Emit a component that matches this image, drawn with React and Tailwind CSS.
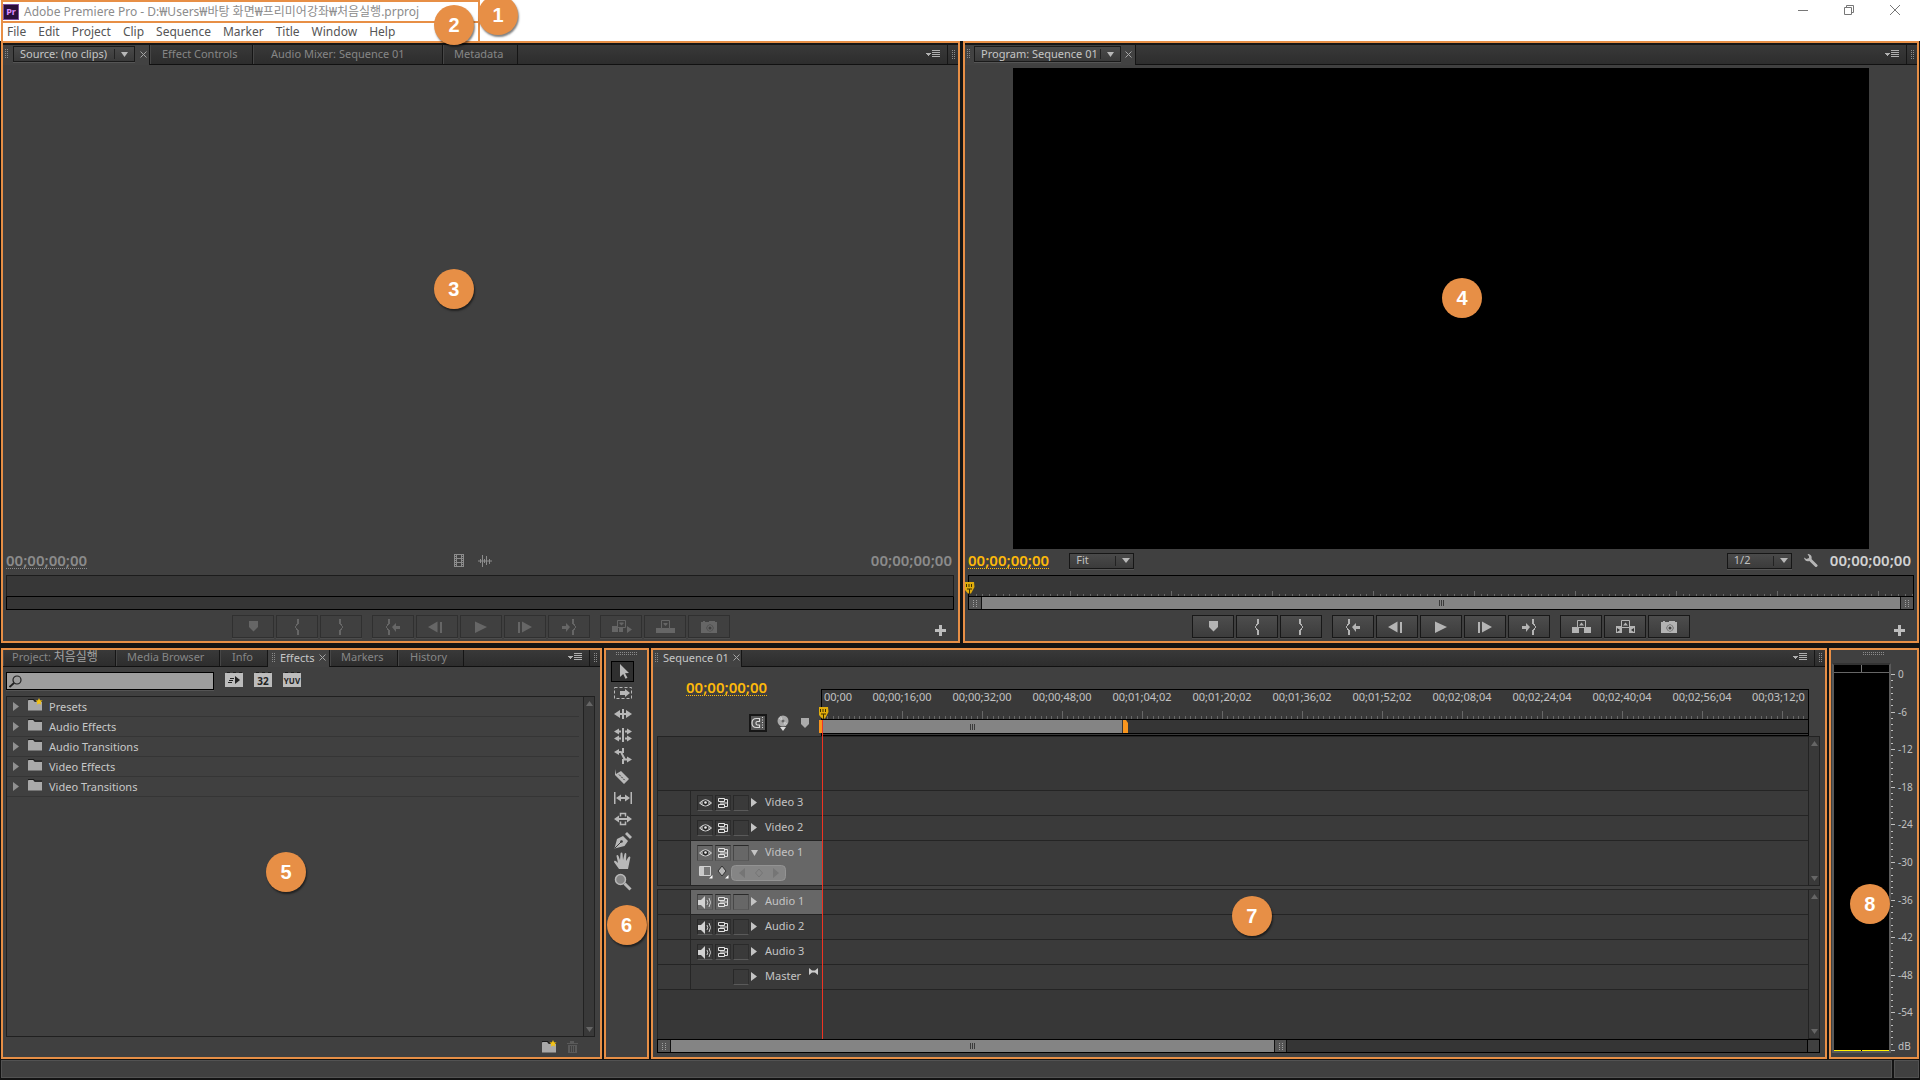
import React from "react";

const UI = "font-['Noto_Sans','Noto_Sans_CJK_KR',sans-serif]";

/* ---------- shared pieces ---------- */

function Badge({ n, className }) {
  return (
    <span
      className={
        "absolute z-20 flex size-10 -translate-x-1/2 -translate-y-1/2 items-center justify-center rounded-full bg-[#e78f46] font-['Liberation_Sans',sans-serif] text-xl font-bold text-white shadow-[1px_2px_2px_rgba(0,0,0,0.5)] " +
        className
      }
    >
      {n}
    </span>
  );
}

function Frame({ label, className = "", children }) {
  return (
    <section
      aria-label={label}
      className={"relative flex min-h-0 min-w-0 flex-col border-2 border-[#e78f46] bg-[#404040] " + className}
    >
      {children}
    </section>
  );
}

function Grip({ wide = false }) {
  const cols = wide ? 11 : 2;
  const rows = wide ? 2 : 5;
  const dots = [];
  for (let x = 0; x < cols; x++) for (let y = 0; y < rows; y++) dots.push([x * 2, y * 2]);
  return (
    <svg width={cols * 2} height={rows * 2} className="shrink-0" shapeRendering="crispEdges" aria-hidden="true">
      {dots.map(([x, y]) => (
        <rect key={x + "-" + y} x={x} y={y} width="1" height="1" fill="#8a8a8a" />
      ))}
    </svg>
  );
}

function CloseIcon() {
  return (
    <button type="button" aria-label="Close tab" className="flex size-2 items-center justify-center">
      <svg width="7" height="7" viewBox="0 0 7 7" stroke="#a5a5a5" strokeWidth="1">
        <path d="M.5.5l6 6M6.500.5l-6 6" />
      </svg>
    </button>
  );
}

function TabEnd() {
  return (
    <div className="ml-auto flex items-center">
      <button type="button" aria-label="Panel menu" className="mr-[7px] mb-0.5">
        <svg width="14" height="8" viewBox="0 0 14 8" shapeRendering="crispEdges" className="block">
          <path d="M0 3h5l-2.500 3z" fill="#b0b0b0" />
          <path d="M6 0h8v1H6zM6 2h8v1H6zM6 4h8v1H6zM6 6h8v1H6z" fill="#b0b0b0" />
        </svg>
      </button>
      <span className="flex items-center self-stretch border-l border-[#161616] pr-0.5 pl-1">
        <Grip />
      </span>
    </div>
  );
}

function TabBar({ tall = false, children }) {
  return (
    <div
      className={
        "flex shrink-0 border-b border-[#111] bg-linear-to-b from-[#393939] to-[#2d2d2d] text-[11px] leading-4 text-[#868686] " +
        (tall ? "h-[22px] border-t-2 border-t-[#151515]" : "h-[17px]")
      }
    >
      {children}
      <TabEnd />
    </div>
  );
}

function Tab({ className = "", children }) {
  return (
    <button
      type="button"
      className={"flex items-center border-r border-l border-r-[#151515] border-l-[#464646] pb-0.5 text-left whitespace-nowrap " + className}
    >
      {children}
    </button>
  );
}

function ActiveTab({ className = "", children }) {
  return (
    <div className={"-mb-px flex items-center border-r border-[#151515] bg-[#424242] pb-0.5 text-[#c6c6c6] " + className}>{children}</div>
  );
}

function MonitorMenu({ label, className }) {
  return (
    <button
      type="button"
      className={
        "flex h-4 items-center border border-[#1a1a1a] bg-linear-to-b from-[#4a4a4a] to-[#3a3a3a] pl-1.5 leading-[14px] whitespace-nowrap shadow-[0_1px_0_#555] " +
        className
      }
    >
      {label}
      <span className="ml-auto flex h-2.5 items-center border-l border-[#222] px-1.5">
        <svg width="7" height="5" viewBox="0 0 7 5">
          <path d="M0 0h7L3.500 5z" fill="#b8b8b8" />
        </svg>
      </span>
    </button>
  );
}

function Picker({ label, options }) {
  return (
    <label className="relative flex">
      <select
        aria-label={label}
        className="h-4 w-[65px] appearance-none border border-[#161616] bg-linear-to-b from-[#4a4a4a] to-[#3b3b3b] pb-0.5 pl-1.5 text-[11px] leading-3 text-[#c0c0c0] shadow-[0_1px_0_#555]"
      >
        {options.map((o) => (
          <option key={o}>{o}</option>
        ))}
      </select>
      <span className="pointer-events-none absolute top-[3px] right-1 flex h-2.5 items-center border-l border-[#222] pl-1.5">
        <svg width="8" height="5" viewBox="0 0 8 5">
          <path d="M0 0h8L4 5z" fill="#b8b8b8" />
        </svg>
      </span>
    </label>
  );
}

function Timecode({ className = "" }) {
  return (
    <span className={"border-b border-dotted text-[15px] leading-4 font-semibold whitespace-nowrap " + className}>00;00;00;00</span>
  );
}

/* ---------- transport icons (28 x 16) ---------- */

const TRANSPORT = {
  marker: <path d="M10 2h9v6l-4.500 4.500L10 8z" />,
  markIn: <path d="M14 0h2v5h-1v1h-1v1h-1v2h1v1h1v1h1v5h-2v-5h-1v-2h-1V7h1V5h1z" />,
  markOut: <path d="M12 0h2v5h1v2h1v2h-1v2h-1v5h-2v-5h1v-1h1V9h1V7h-1V6h-1V5h-1z" />,
  goIn: (
    <>
      <path d="M9 0h2v5h-1v1H9v1H8v2h1v1h1v1h1v5H9v-5H8V9H7V7h1V5h1z" />
      <path d="M13 8l4-4v3h4v3h-4v3z" />
    </>
  ),
  stepBack: <path d="M5 8l9.500-5.500v11zM17 3h2v11h-2z" />,
  play: <path d="M8 2.500l12 5.500-12 6z" />,
  stepFwd: <path d="M7 3h2v11H7zM11 2.500L21 8l-10 5.500z" />,
  goOut: (
    <>
      <path d="M17 0h2v5h1v2h1v2h-1v2h-1v5h-2v-5h1v-1h1V9h1V7h-1V6h-1V5h-1z" />
      <path d="M15 8l-4-4v3H7v3h4v3z" />
    </>
  ),
  insert: (
    <>
      <path d="M5 7h6v6H5zM18 7h2l5 3.500-5 3.500V7zM12 9h4v4h-4z" />
      <path d="M10.500 1.500h8v7h-8z" fill="none" stroke="currentColor" />
      <path d="M12.500 3.500h4v1l-2 2-2-2z" />
    </>
  ),
  overwrite: (
    <>
      <path d="M5 9h19v5H5z" />
      <path d="M10.500 1.500h8v8h-8z" fill="#404040" stroke="currentColor" />
      <path d="M12.500 4h4v1l-2 2-2-2z" />
    </>
  ),
  lift: (
    <>
      <path d="M5 8h7v6H5zM17 8h7v6h-7z" />
      <path d="M10.500 1.500h8v7h-8z" fill="#404040" stroke="currentColor" />
      <path d="M12 6.500l2.500-3 2.500 3z" />
    </>
  ),
  extract: (
    <>
      <path d="M5 7h6v7H5zM18 7h6v7h-6z" />
      <path d="M6 9l3 2-3 2zM23 9l-3 2 3 2z" fill="#333" />
      <path d="M10.500 1.500h8v7h-8z" fill="#404040" stroke="currentColor" />
      <path d="M12 6.500l2.500-3 2.500 3z" />
    </>
  ),
  camera: (
    <>
      <path fillRule="evenodd" d="M6 3h2V2h2v1h4V2h6v1h2v11H6zM15 5.500a3.500 3.500 0 1 0 .01 0z" />
      <circle cx="15" cy="9" r="2.200" fill="none" stroke="currentColor" strokeWidth="1.400" />
    </>
  ),
};

function Transport({ disabled = false, lastGroup }) {
  const groups = [
    ["marker", "markIn", "markOut"],
    ["goIn", "stepBack", "play", "stepFwd", "goOut"],
    lastGroup,
  ];
  return (
    <div className="relative mt-[5px] mb-[3px] flex justify-center gap-2.5">
      {groups.map((g) => (
        <div key={g[0]} className="flex gap-0.5">
          {g.map((k) => (
            <button
              key={k}
              type="button"
              aria-label={k}
              disabled={disabled}
              className={
                "flex h-[23px] w-[42px] items-center justify-center border shadow-[0_1px_0_#4c4c4c] " +
                (disabled
                  ? "border-[#303030] bg-[#404040] text-[#666]"
                  : "border-[#181818] bg-linear-to-b from-[#4d4d4d] to-[#3c3c3c] text-[#b4b4b4]")
              }
            >
              <svg width="28" height="16" viewBox="0 0 28 16" fill="currentColor">
                {TRANSPORT[k]}
              </svg>
            </button>
          ))}
        </div>
      ))}
      <button type="button" aria-label="Button editor" className="absolute right-3 bottom-0.5">
        <svg width="11" height="11" viewBox="0 0 11 11" fill="#bdbdbd" className="block">
          <path d="M4 0h3v4h4v3H7v4H4V7H0V4h4z" />
        </svg>
      </button>
    </div>
  );
}

function Ticks({ major, tall, short, height }) {
  const items = [];
  for (let i = 1; i < 15 * 30; i++) items.push(i);
  return (
    <svg width="100%" height={height} className="block min-w-0" shapeRendering="crispEdges" aria-hidden="true">
      {items.map((i) => {
        const h = i % 15 === 0 ? tall : short;
        return <rect key={i} x={Math.round((i * major) / 15)} y={height - h} width="1" height={h} fill="#686868" />;
      })}
    </svg>
  );
}

function Playhead() {
  return (
    <svg width="10" height="14" viewBox="0 0 10 14" className="block">
      <path d="M0 1h9l.5 5-3.500 6.500H3L0 9z" fill="#e0ac0c" />
      <path d="M1.500 3v3M4 3v3M6.500 3v3M2 8h5M4.500 8v5" stroke="#3d2f00" />
    </svg>
  );
}

function Center3() {
  return <span className="h-1.5 w-[5px] border-x border-[#3a3a3a] bg-[linear-gradient(90deg,transparent_1px,#3a3a3a_1px_2px,transparent_2px)]" />;
}

function Handle({ className = "" }) {
  return (
    <span className={"flex w-[13px] shrink-0 items-center justify-center border-[#111] bg-[#555] " + className}>
      <svg width="4" height="7" shapeRendering="crispEdges" fill="#a0a0a0">
        <path d="M0 0h1v1H0zM3 0h1v1H3zM0 2h1v1H0zM3 2h1v1H3zM0 4h1v1H0zM3 4h1v1H3zM0 6h1v1H0zM3 6h1v1H3z" />
      </svg>
    </span>
  );
}

/* ---------- header ---------- */

const MENUS = ["File", "Edit", "Project", "Clip", "Sequence", "Marker", "Title", "Window", "Help"];

function Header() {
  return (
    <header className="relative z-10 flex h-[41px] shrink-0 justify-between bg-white pl-px">
      <div className="w-[479px]">
        <div className="flex h-[23px] items-center gap-[5px] border-2 border-[#e78f46] text-xs leading-4 whitespace-nowrap text-[#8c8c8c]">
          <span className="flex size-4 items-center justify-center border border-[#7b4fa0] bg-[#2a0f3a] text-[9px] leading-3 font-bold text-[#dd8cff]">
            Pr
          </span>
          <h1>Adobe Premiere Pro - D:₩Users₩바탕 화면₩프리미어강좌₩처음실행.prproj</h1>
        </div>
        <nav className="flex h-[18px] items-center gap-3 border-x-2 border-[#e78f46] pl-1 text-xs leading-4 text-[#555]">
          {MENUS.map((m) => (
            <button key={m} type="button">
              {m}
            </button>
          ))}
        </nav>
      </div>
      <div className="flex h-5 items-center gap-9 pr-5 text-[#777]">
        <button type="button" aria-label="Minimize">
          <svg width="10" height="10" viewBox="0 0 10 10" stroke="currentColor" fill="none">
            <path d="M0 5.500h10" />
          </svg>
        </button>
        <button type="button" aria-label="Restore">
          <svg width="10" height="10" viewBox="0 0 10 10" stroke="currentColor" fill="none">
            <path d="M.5 2.500h7v7h-7zM2.500 2V.5h7v7H8" />
          </svg>
        </button>
        <button type="button" aria-label="Close">
          <svg width="10" height="10" viewBox="0 0 10 10" stroke="currentColor" fill="none">
            <path d="M0 0l10 10M10 0L0 10" />
          </svg>
        </button>
      </div>
      <Badge n="1" className="top-[15px] left-[498px]" />
      <Badge n="2" className="top-[25px] left-[454px]" />
    </header>
  );
}

/* ---------- monitors ---------- */

function SourceMonitor() {
  return (
    <Frame label="Source">
      <TabBar tall>
        <ActiveTab className="w-[147px] gap-1 pl-0.5">
          <Grip />
          <MonitorMenu label="Source: (no clips)" className="w-[122px]" />
          <CloseIcon />
        </ActiveTab>
        <Tab className="w-[103px] pl-[11px]">Effect Controls</Tab>
        <Tab className="w-[190px] pl-[17px]">Audio Mixer: Sequence 01</Tab>
        <Tab className="w-[75px] pl-2.5">Metadata</Tab>
      </TabBar>
      <div className="min-h-0 flex-1" />
      <div className="flex h-[26px] shrink-0 items-center justify-between pr-1.5 pb-[3px] pl-[3px] text-[#8b8b8b]">
        <Timecode className="border-[#8b8b8b]" />
        <div className="mr-3 flex items-center gap-3.5">
          <svg width="10" height="13" viewBox="0 0 10 13" shapeRendering="crispEdges">
            <path
              fillRule="evenodd"
              fill="#8c8c8c"
              d="M0 0h10v13H0zM3 1v3h4V1zM3 5v3h4V5zM3 9v3h4V9zM1 1h1v1H1zM1 3h1v1H1zM1 5h1v1H1zM1 7h1v1H1zM1 9h1v1H1zM1 11h1v1H1zM8 1h1v1H8zM8 3h1v1H8zM8 5h1v1H8zM8 7h1v1H8zM8 9h1v1H8zM8 11h1v1H8z"
            />
          </svg>
          <svg width="14" height="12" viewBox="0 0 14 12" stroke="#8c8c8c">
            <path d="M0 6h14M2.500 4v4M4.500 0v12M6.500 4v4M8.500 1v9M11.500 4v5" />
          </svg>
        </div>
        <Timecode className="border-transparent" />
      </div>
      <div className="mr-1 ml-[3px] h-[22px] shrink-0 border border-[#1c1c1c] border-b-black bg-[#373737]" />
      <div className="mr-1 ml-[3px] h-[13px] shrink-0 border border-t-0 border-black bg-[#353535]" />
      <Transport disabled lastGroup={["insert", "overwrite", "camera"]} />
      <Badge n="3" className="top-[41.2%] left-[47.2%]" />
    </Frame>
  );
}

function ProgramMonitor() {
  return (
    <Frame label="Program">
      <TabBar tall>
        <ActiveTab className="w-[171px] gap-[3px] pl-0.5">
          <Grip />
          <MonitorMenu label="Program: Sequence 01" className="w-[147px]" />
          <CloseIcon />
        </ActiveTab>
      </TabBar>
      <div className="flex min-h-0 flex-1 justify-center pt-[3px]">
        <div className="aspect-video h-full bg-black" />
      </div>
      <div className="flex h-[26px] shrink-0 items-center pr-1.5 pb-[3px] pl-[3px]">
        <Timecode className="text-[#fdb90b]" />
        <div className="ml-5">
          <Picker label="Zoom level" options={["Fit", "50%", "100%"]} />
        </div>
        <div className="ml-auto flex items-center gap-3">
          <Picker label="Playback resolution" options={["1/2", "Full", "1/4"]} />
          <button type="button" aria-label="Settings">
            <svg width="14" height="14" viewBox="0 0 14 14" fill="#b5b5b5" className="block">
              <path d="M3.500 0C6.500-.3 8.300 2.200 7.500 5l6 6c.6.900-.9 2.500-2 2L5.300 7C3 8 .2 6.500 0 3.500L2.500 5 5 4V2.500z" />
            </svg>
          </button>
          <Timecode className="border-transparent text-[#d2d2d2]" />
        </div>
      </div>
      <div className="relative mx-[3px] shrink-0">
        <div className="flex h-[22px] flex-col justify-end border border-black bg-[#373737]">
          <Ticks major={101} tall={5} short={2} height={6} />
        </div>
        <div className="flex h-[13px] border border-t-0 border-black">
          <Handle className="border-r" />
          <div className="flex flex-1 items-center justify-center bg-[#848484]">
            <Center3 />
          </div>
          <Handle className="border-l" />
        </div>
        <span className="absolute top-1.5 -left-[3px]">
          <Playhead />
        </span>
      </div>
      <Transport lastGroup={["lift", "extract", "camera"]} />
      <Badge n="4" className="top-[42.7%] left-[52.2%]" />
    </Frame>
  );
}

/* ---------- effects ---------- */

function Folder({ star = false }) {
  return (
    <svg width="16" height="14" viewBox="0 0 16 14" className="block">
      <path d="M1 1.500h6l1 1.500h7" stroke="#1a1a1a" fill="none" />
      <path d="M1 3q0-1 1-1h4l1.500 2H15v8.500H1z" fill="#a9a9a9" />
      {star && <path d="M12 0l1 2.200 2.500.3-1.800 1.700.5 2.600L12 5.500 9.800 6.800l.5-2.600L8.500 2.500 11 2.200z" fill="#f3c316" />}
    </svg>
  );
}

function ScrollArrow({ down = false }) {
  return (
    <svg width="7" height="5" viewBox="0 0 7 5" fill="#666" className="block">
      {down ? <path d="M0 0h7L3.500 5z" /> : <path d="M0 5h7L3.500 0z" />}
    </svg>
  );
}

function VScroll({ className = "" }) {
  return (
    <div className={"flex w-3 shrink-0 flex-col items-center justify-between border border-[#222] bg-[#393939] py-1 " + className}>
      <ScrollArrow />
      <ScrollArrow down />
    </div>
  );
}

function BrickButton({ label, children }) {
  return (
    <button type="button" aria-label={label} className="block">
      <svg width="18" height="15" viewBox="0 0 18 15" className="block">
        <path d="M0 1h2V0h3v1h3V0h3v1h3V0h3v1h1v14H0z" fill="#bcbcbc" />
        <path d="M2 .5h3M8 .5h3M14 .5h3" stroke="#1c1c1c" />
        {children}
      </svg>
    </button>
  );
}

const EFFECTS = ["Presets", "Audio Effects", "Audio Transitions", "Video Effects", "Video Transitions"];

function EffectsPanel() {
  return (
    <Frame label="Effects">
      <TabBar>
        <Tab className="w-[113px] pl-2">
          Project:&nbsp;<span className="text-xs leading-4 text-[#a5a5a5]">처음실행</span>
        </Tab>
        <Tab className="w-[104px] pl-2.5">Media Browser</Tab>
        <Tab className="w-12 pl-[11px]">Info</Tab>
        <ActiveTab className="w-[62px] gap-1 pl-1">
          <Grip />
          Effects
          <CloseIcon />
        </ActiveTab>
        <Tab className="w-[68px] pl-2.5">Markers</Tab>
        <Tab className="w-[66px] pl-[11px]">History</Tab>
      </TabBar>
      <div className="mt-[5px] ml-[3px] flex items-start gap-[11px]">
        <label className="flex h-[18px] w-52 items-center border border-black bg-[#9e9e9e] pl-0.5 shadow-[0_1px_0_#555]">
          <svg width="13" height="13" viewBox="0 0 13 13" fill="none" stroke="#222" strokeWidth="1.200" className="shrink-0">
            <circle cx="8" cy="5" r="4" />
            <path d="M5 8l-4.500 4" strokeWidth="1.800" />
          </svg>
          <input aria-label="Search effects" className="min-w-0 flex-1 bg-transparent px-1 text-[11px] text-black outline-none" />
        </label>
        <BrickButton label="Accelerated effects">
          <path d="M10 4l5 4-5 4z" fill="#222" />
          <path d="M5 6.500h4M4 8.500h4M3 10.500h4" stroke="#222" />
        </BrickButton>
        <BrickButton label="32-bit color effects">
          <text x="9" y="13" textAnchor="middle" className="fill-[#222] text-[10px] font-bold">
            32
          </text>
        </BrickButton>
        <BrickButton label="YUV effects">
          <text x="9" y="12" textAnchor="middle" className="fill-[#222] text-[8px] font-bold">
            YUV
          </text>
        </BrickButton>
      </div>
      <div className="mt-1.5 mr-[5px] ml-[3px] flex min-h-0 flex-1 border-y border-l border-[#202020]">
        <ul className="min-w-0 flex-1 text-[11px] leading-5 text-[#c8c8c8]">
          {EFFECTS.map((e, i) => (
            <li key={e} className="mr-1 border-b border-[#353535]">
              <button type="button" className="flex h-[19px] items-center pl-1.5">
                <svg width="6" height="9" viewBox="0 0 6 9" fill="#909090">
                  <path d="M0 0l6 4.500L0 9z" />
                </svg>
                <span className="mr-1.5 mb-1 ml-2">
                  <Folder star={i === 0} />
                </span>
                {e}
              </button>
            </li>
          ))}
        </ul>
        <VScroll className="border-y-0" />
      </div>
      <div className="flex h-[20px] shrink-0 items-center justify-end gap-2.5 pr-[22px]">
        <button type="button" aria-label="New custom bin">
          <Folder star />
        </button>
        <button type="button" aria-label="Delete" disabled>
          <svg width="11" height="12" viewBox="0 0 11 12" fill="#5a5a5a" className="block">
            <path d="M0 2h3V0h4v2h4v1H0zM1 4h9v8H1z" />
            <path d="M3.500 5v6M5.500 5v6M7.500 5v6" stroke="#404040" />
          </svg>
        </button>
      </div>
      <Badge n="5" className="top-[54.5%] left-[47.4%]" />
    </Frame>
  );
}

/* ---------- tools (20 x 20) ---------- */

const TOOLS = [
  ["Selection", <path d="M7 2l9 9-4 .300 2.500 4.500-2 1-2.300-4.800L7 15z" />],
  [
    "Track Select",
    <>
      <path d="M1.500 4.500h17v11h-17z" fill="none" stroke="currentColor" strokeDasharray="3 2" />
      <path d="M7 8h5V6l5 4-5 4v-2H7z" />
    </>,
  ],
  ["Ripple Edit", <path d="M1 10l6-4v3h2V5h2v4h2V6l6 4-6 4v-3h-2v4H9v-4H7v3z" />],
  [
    "Rolling Edit",
    <path d="M9 3h2v14H9zM1 6.500L6 3.500v2h2v2H6v2zM19 6.500L14 3.500v2h-2v2h2v2zM1 13.500L6 10.500v2h2v2H6v2zM19 13.500L14 10.500v2h-2v2h2v2z" />,
  ],
  ["Rate Stretch", <path d="M9 2h2v5H9zM9 13h2v5H9zM1 6L6 3v2h2.500l4 7.500H14v-2l5 3-5 3v-2h-3L7.500 7H6v2z" />],
  [
    "Razor",
    <>
      <path d="M2 2v6l9 9 5-5-8-8-5 3z" />
      <path d="M6 7.500l6 6" stroke="#333" strokeDasharray="2 1" />
    </>,
  ],
  ["Slip", <path d="M1 4h1.500v12H1zM17.500 4H19v12h-1.500zM3 10l5-3.500V9h4V6.500l5 3.500-5 3.500V11H8v2.500z" />],
  [
    "Slide",
    <>
      <path d="M1 10l5-3.500V9h8V6.500l5 3.500-5 3.500V11H6v2.500z" />
      <path d="M7.500 7.500v-3h5v3M7.500 12.500v3h5v-3" fill="none" stroke="currentColor" strokeWidth="1.500" />
    </>,
  ],
  [
    "Pen",
    <>
      <path d="M1.500 18.500L4 9l6-3 5 5-3.500 5z" />
      <path d="M12 4l2-2 5 5-2 2z" />
      <path d="M2 18l6-6" stroke="#3a3a3a" />
      <circle cx="8.500" cy="11.500" r="1.300" fill="#3a3a3a" />
    </>,
  ],
  [
    "Hand",
    <path d="M6 18l-5-7c0-1.500 1.500-1.500 2.500-.5L5 12 3.500 5c0-1.500 1.500-1.500 2 0L7 9 7.500 2.500c.2-1.500 1.800-1.500 2 0L10 9l1.500-6c.5-1.500 2-1 1.800.5L13 10l2.500-4c.8-1.200 2.200-.5 1.800.8L15 18z" />,
  ],
  [
    "Zoom",
    <>
      <circle cx="7.500" cy="7.500" r="5" fill="#858585" stroke="currentColor" strokeWidth="1.500" />
      <path d="M11.500 11.500l6 6" stroke="currentColor" strokeWidth="3" />
    </>,
  ],
];

function ToolsPanel() {
  return (
    <Frame label="Tools">
      <div className="flex h-[11px] items-start justify-center pt-0.5">
        <Grip wide />
      </div>
      <div className="ml-[5px] flex flex-col">
        {TOOLS.map(([name, art], i) => (
          <button
            key={name}
            type="button"
            aria-label={name + " Tool"}
            className={
              "flex h-[21px] w-[23px] items-center justify-center text-[#b8b8b8] " +
              (i === 0 ? "border border-black bg-[#2f2f2f]" : "")
            }
          >
            <svg width="20" height="20" viewBox="0 0 20 20" fill="currentColor" className="shrink-0">
              {art}
            </svg>
          </button>
        ))}
      </div>
      <Badge n="6" className="top-[67.6%] left-1/2" />
    </Frame>
  );
}

/* ---------- timeline ---------- */

const TIMES = [
  "00;00;16;00",
  "00;00;32;00",
  "00;00;48;00",
  "00;01;04;02",
  "00;01;20;02",
  "00;01;36;02",
  "00;01;52;02",
  "00;02;08;04",
  "00;02;24;04",
  "00;02;40;04",
  "00;02;56;04",
];

function Slot({ label, children }) {
  return (
    <button
      type="button"
      aria-label={label}
      className="mr-0.5 flex size-4 items-center justify-center border border-t-[#2a2a2a] border-r-black/20 border-b-[#5a5a5a] border-l-black/30"
    >
      {children}
    </button>
  );
}

const Eye = (
  <svg width="13" height="10" viewBox="0 0 13 10" className="shrink-0">
    <path d="M.5 5Q6.500-1.500 12.500 5 6.500 11 .5 5z" fill="#8d8d8d" stroke="#d5d5d5" />
    <circle cx="6.500" cy="4.800" r="2.600" fill="#222" />
    <circle cx="6.500" cy="4.500" r="1.300" fill="#eee" />
  </svg>
);

const Speaker = (
  <svg width="14" height="13" viewBox="0 0 14 13" className="shrink-0">
    <path d="M0 4h3l4-4v13L3 9H0z" fill="#d2d2d2" />
    <path d="M9 4q1.500 2.500 0 5M11 2q3 4.500 0 9" fill="none" stroke="#cfcfcf" />
  </svg>
);

const Sync = (
  <svg width="11" height="10" viewBox="0 0 11 10" fill="none" stroke="#e2e2e2" className="shrink-0">
    <path d="M.5.5h6v3h-6zM.5 6.500h6v3h-6zM6.500 1.500h3v7h-3M2 5h7" />
  </svg>
);

function TrackRow({ name, kind, open = false, on = false, children }) {
  return (
    <div className="flex shrink-0 border-t border-[#242424] bg-[#3a3a3a]">
      <div className="w-[33px] shrink-0 border-r border-[#262626]" />
      <div className={"relative w-[131px] shrink-0 pl-1.5 text-[11px] leading-5 text-[#c4c4c4] " + (on ? "bg-[#676767]" : "")}>
        <div className="flex h-6 items-center">
          {kind ? (
            <>
              <Slot label={kind === "video" ? "Toggle output of " + name : "Mute " + name}>{kind === "video" ? Eye : Speaker}</Slot>
              <Slot label={"Sync lock " + name}>{Sync}</Slot>
            </>
          ) : (
            <span className="w-9" />
          )}
          <Slot label={"Lock " + name} />
          <button type="button" className="flex items-center gap-[7px] pb-0.5" aria-expanded={open}>
            <svg width="7" height="9" viewBox="0 0 7 9" fill="#c4c4c4">
              {open ? <path d="M0 2h7L3.500 8z" /> : <path d="M0 0l6 4.500L0 9z" />}
            </svg>
            {name}
          </button>
        </div>
        {children}
        {!kind && (
          <svg width="9" height="7" viewBox="0 0 9 7" fill="#ccc" className="absolute top-[3px] right-1">
            <path d="M0 0l3 2.500h3L9 0v7L6 4.500H3L0 7z" />
          </svg>
        )}
      </div>
      <div className="flex-1 border-l border-[#242424]" />
    </div>
  );
}

function Timeline() {
  return (
    <Frame label="Timeline">
      <TabBar>
        <ActiveTab className="w-[89px] gap-1 pl-0.5">
          <Grip />
          <span className="whitespace-nowrap">Sequence 01</span>
          <CloseIcon />
        </ActiveTab>
      </TabBar>
      <div className="flex h-[69px] shrink-0">
        <div className="flex w-[168px] shrink-0 flex-col justify-between">
          <Timecode className="mt-3 ml-[33px] self-start text-[#fdb90b]" />
          <div className="mb-1 flex items-center justify-end gap-2.5 pr-3">
            <button type="button" aria-label="Snap" className="flex size-[18px] items-center justify-center border-2 border-[#161616] bg-[#555]">
              <svg width="14" height="12" viewBox="0 0 14 12" fill="none" stroke="#d8d8d8" className="shrink-0">
                <path d="M8.500 1.500H5.500q-4.500 0-4.500 4.500t4.500 4.500h3V8H6.500Q5 8 5 6.200t1.500-1.700h2z" strokeWidth="1.200" />
                <path d="M11.500 0v12" strokeDasharray="1 1.500" />
              </svg>
            </button>
            <button type="button" aria-label="Set encore chapter marker">
              <svg width="12" height="16" viewBox="0 0 12 16" className="block">
                <circle cx="6" cy="6" r="5.500" fill="#aaa" />
                <path d="M2 3l8 6M3.500 1.500l5 9" stroke="#d0d0d0" />
                <circle cx="6" cy="6" r="1.500" fill="#666" />
                <path d="M3 12h6l-3 4z" fill="#ddd" />
              </svg>
            </button>
            <button type="button" aria-label="Add marker" className="ml-0.5">
              <svg width="8" height="10" viewBox="0 0 8 10" fill="#ababab" className="block">
                <path d="M0 0h8v6L4 10 0 6z" />
              </svg>
            </button>
          </div>
        </div>
        <div className="relative mt-[22px] flex min-w-0 flex-1 flex-col border-x border-t border-black bg-[#393939]">
          <div className="flex h-[21px] overflow-hidden text-[11px] leading-[14px] whitespace-nowrap text-[#c4c4c4]">
            <span className="w-10 shrink-0 pl-0.5">00;00</span>
            {TIMES.map((t) => (
              <span key={t} className="w-20 shrink-0 text-center">
                {t}
              </span>
            ))}
            <span className="pl-2.5">00;03;12;0</span>
          </div>
          <Ticks major={80} tall={8} short={3} height={8} />
          <div className="flex h-[15px] border-y border-black bg-[#353535]">
            <div className="flex w-[300px] items-center justify-center bg-[#848484]">
              <Center3 />
            </div>
            <svg width="6" height="13" viewBox="0 0 6 13" fill="#f8951d">
              <path d="M1 0h3l2 3v10H1z" />
            </svg>
          </div>
          <span className="h-0.5 border-b border-black" />
          <span className="absolute bottom-[3px] -left-[3px] h-[13px] w-[3px] bg-[#f8951d]" />
          <span className="absolute bottom-0 left-0 h-4 w-px bg-[#ef3322]" />
          <span className="absolute top-[16px] -left-[3px]">
            <Playhead />
          </span>
        </div>
        <div className="w-4 shrink-0" />
      </div>

      <div className="relative mr-[5px] ml-1 flex min-h-0 flex-1 flex-col gap-[3px]">
        <div className="flex min-h-0 flex-1">
          <div className="flex min-w-0 flex-1 flex-col border-y border-l border-[#242424] bg-[#373737]">
            <div className="min-h-0 flex-1" />
            <TrackRow name="Video 3" kind="video" />
            <TrackRow name="Video 2" kind="video" />
            <TrackRow name="Video 1" kind="video" open on>
              <div className="flex h-5 items-start pl-0.5">
                <svg width="14" height="14" viewBox="0 0 14 14">
                  <path d="M.5 1.500h11v9H.5z" fill="#777" stroke="#d0d0d0" />
                  <path d="M1 2h4v8H1z" fill="#c8c8c8" />
                  <path d="M13.500 10v3.500H10z" fill="#fff" />
                </svg>
                <svg width="12" height="14" viewBox="0 0 12 14" className="ml-1">
                  <path d="M5 1l4 5-4 5-4-5z" fill="#b5b5b5" stroke="#333" />
                  <path d="M11.500 10v3.500H8z" fill="#fff" />
                </svg>
                <svg width="56" height="16" viewBox="0 0 56 16" className="ml-0.5">
                  <rect x=".5" y=".5" width="54" height="15" rx="4" fill="#858585" stroke="#939393" />
                  <path d="M14 3v10L8 8zM42 3v10l6-5z" fill="#757575" />
                  <path d="M28 4l3.500 4-3.500 4-3.500-4z" fill="none" stroke="#757575" />
                </svg>
              </div>
            </TrackRow>
          </div>
          <VScroll />
        </div>
        <div className="flex min-h-0 flex-1">
          <div className="flex min-w-0 flex-1 flex-col border-l border-[#242424] bg-[#373737]">
            <TrackRow name="Audio 1" kind="audio" on />
            <TrackRow name="Audio 2" kind="audio" />
            <TrackRow name="Audio 3" kind="audio" />
            <TrackRow name="Master" />
            <div className="min-h-0 flex-1 border-t border-[#242424]" />
          </div>
          <VScroll />
        </div>
        <span className="absolute inset-y-0 left-[165px] w-px bg-[#ef3322]" />
      </div>

      <div className="mr-[5px] mb-1 ml-1 flex h-[14px] shrink-0">
        <div className="flex min-w-0 flex-1 border border-black bg-[#353535]">
          <Handle className="border-r" />
          <div className="flex w-[52.5%] items-center justify-center bg-[#848484]">
            <Center3 />
          </div>
          <Handle className="border-x" />
        </div>
        <span className="w-3 border border-l-0 border-black bg-[#404040]" />
      </div>
      <Badge n="7" className="top-[65.4%] left-[51.1%]" />
    </Frame>
  );
}

/* ---------- audio meter ---------- */

const LEVELS = ["0", "-6", "-12", "-18", "-24", "-30", "-36", "-42", "-48", "-54"];

function AudioMeter() {
  return (
    <Frame label="Audio meters">
      <div className="flex h-[13px] shrink-0 items-start justify-center pt-0.5">
        <Grip wide />
      </div>
      <div className="mb-1 ml-px flex min-h-0 flex-1 text-[#c0c0c0]">
        <div className="flex w-[59px] flex-col border-2 border-[#5a5a5a] border-t-[#333] bg-black">
          <div className="flex h-2 border-b border-[#666]">
            <span className="w-1/2 border-r border-[#777]" />
          </div>
          <div className="mt-auto flex h-px gap-px">
            <span className="flex-1 bg-[#fff200]" />
            <span className="flex-1 bg-[#fff200]" />
          </div>
        </div>
        <div className="mt-[11px] mb-0.5 flex w-[23px] flex-col">
          {LEVELS.map((l) => (
            <div key={l} className="relative flex flex-1 flex-col">
              {[0, 1, 2, 3, 4, 5].map((k) => (
                <span key={k} className={"flex-1 border-t border-[#c0c0c0] " + (k === 0 ? "w-1" : "w-0.5")} />
              ))}
              <span className="absolute -top-2 left-[7px] text-[10px] leading-4">{l}</span>
            </div>
          ))}
          <span className="relative h-px w-1 shrink-0 bg-[#c0c0c0]">
            <span className="absolute -top-3 left-[7px] text-[10px] leading-4">dB</span>
          </span>
        </div>
      </div>
      <Badge n="8" className="top-[62.5%] left-[45%]" />
    </Frame>
  );
}

/* ---------- page ---------- */

export default function App() {
  return (
    <div className={"flex h-screen min-h-[900px] min-w-[1400px] flex-col overflow-hidden bg-[#131313] " + UI}>
      <Header />
      <main className="grid min-h-0 flex-1 grid-rows-[602fr_411fr] gap-[5px] px-px">
        <div className="grid min-h-0 grid-cols-[959fr_956fr] gap-[3px]">
          <SourceMonitor />
          <ProgramMonitor />
        </div>
        <div className="grid min-h-0 grid-cols-[601fr_45px_1176fr_90px] gap-0.5">
          <EffectsPanel />
          <ToolsPanel />
          <Timeline />
          <AudioMeter />
        </div>
      </main>
      <footer className="flex h-[21px] shrink-0 gap-0.5 px-px pt-px pb-0.5">
        <span className="flex-1 border border-[#525252] bg-[#404040]" />
        <span className="w-[25px] border border-[#525252] bg-[#404040]" />
      </footer>
    </div>
  );
}
